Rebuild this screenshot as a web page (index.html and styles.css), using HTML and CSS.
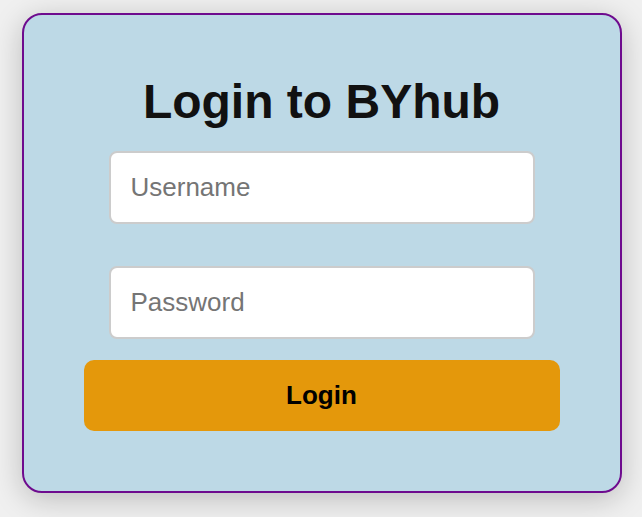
FILE: index.html
```html
<!DOCTYPE html>
<html lang="en">
<head>
<meta charset="utf-8">
<title>Login to BYhub</title>
<link rel="stylesheet" href="styles.css">
</head>
<body>
<div class="page">
  <form class="card">
    <h1 class="title">Login to BYhub</h1>
    <input class="field field-user" type="text" placeholder="Username">
    <input class="field field-pass" type="password" placeholder="Password">
    <button class="btn" type="button">Login</button>
  </form>
</div>
</body>
</html>
```

FILE: styles.css
```css
html, body {
  margin: 0;
  padding: 0;
  min-height: 100%;
  background: #f0f0f0;
  font-family: "Liberation Sans", Arial, sans-serif;
}
html {
  height: 100%;
}
.page {
  display: flex;
  justify-content: center;
  padding-top: 13px;
  padding-left: 1px;
  min-height: 517px;
  box-sizing: border-box;
}
.card {
  box-sizing: border-box;
  width: 600px;
  height: 480px;
  margin: 0;
  background: #bdd9e6;
  border: 2px solid #6e0b8e;
  border-radius: 20px;
  box-shadow: 0 6px 30px rgba(0, 0, 0, 0.22);
  display: flex;
  flex-direction: column;
  align-items: center;
  padding-top: 59px;
}
.title {
  margin: 0;
  font-size: 48px;
  font-weight: bold;
  color: #111;
  line-height: 55px;
}
.field {
  box-sizing: border-box;
  width: 426px;
  height: 73px;
  border: 2px solid #cccccc;
  border-radius: 8px;
  background: #fff;
  padding: 0 20px;
  font-family: "Liberation Sans", Arial, sans-serif;
  font-size: 26px;
  color: #333;
  outline: none;
}
.field::placeholder {
  color: #757575;
}
.field-user {
  margin-top: 22px;
}
.field-pass {
  margin-top: 42px;
}
.btn {
  box-sizing: border-box;
  margin-top: 21px;
  width: 476px;
  height: 71px;
  border: none;
  border-radius: 10px;
  background: #e4980b;
  color: #000;
  font-family: "Liberation Sans", Arial, sans-serif;
  font-size: 26px;
  font-weight: bold;
  cursor: pointer;
}
```
